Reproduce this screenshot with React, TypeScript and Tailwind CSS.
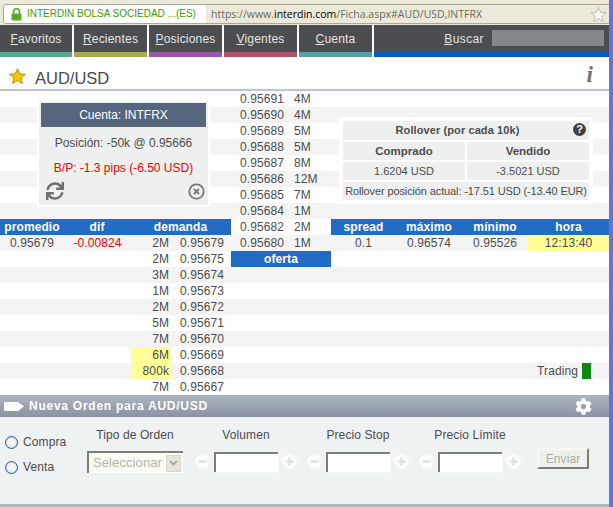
import React from "react";
import { FaSync, FaCog } from "react-icons/fa";

const navs: [string, string, string, string][] = [
  ["F", "avoritos", "w-[72px]", "border-[#57a98c]"],
  ["R", "ecientes", "w-[73px]", "border-[#a9a951]"],
  ["P", "osiciones", "w-[73px]", "border-[#9d55a6]"],
  ["V", "igentes", "w-[73px]", "border-[#a95567]"],
  ["C", "uenta", "w-[73px]", "border-[#579ea9]"],
];

const offer: [string, string][] = [
  ["0.95691", "4M"], ["0.95690", "4M"], ["0.95689", "5M"], ["0.95688", "5M"], ["0.95687", "8M"],
  ["0.95686", "12M"], ["0.95685", "7M"], ["0.95684", "1M"], ["0.95682", "2M"], ["0.95680", "1M"],
];

const demand: [string, string, boolean][] = [
  ["2M", "0.95679", false], ["2M", "0.95675", false], ["3M", "0.95674", false], ["1M", "0.95673", false],
  ["2M", "0.95672", false], ["5M", "0.95671", false], ["7M", "0.95670", false], ["6M", "0.95669", true],
  ["800k", "0.95668", true], ["7M", "0.95667", false],
];

function Head({ w, children }: { w: string; children: React.ReactNode }) {
  return <div className={`${w} text-center font-bold text-white tracking-[0.1px]`}>{children}</div>;
}

function Depth({ d }: { d: [string, string, boolean] }) {
  return (
    <div className="flex w-[100px] h-4">
      <div className={`w-10 text-right pr-[2px] ${d[2] ? "bg-[#ffff99]" : ""}`}>{d[0]}</div>
      <div className="pl-[9px]">{d[1]}</div>
    </div>
  );
}

function Stepper({ label }: { label: string }) {
  return (
    <div className="flex flex-col w-[102px] mr-[10px] items-center">
      <div className="h-[16px] leading-[16px] mb-[8px]">{label}</div>
      <div className="flex items-center gap-1 h-[21px]">
        <Round glyph="minus" />
        <div className="w-16 h-5 bg-white border-t-2 border-l-2 border-[#7f7d72] shadow-[1px_1px_0_#f8f8f0]" />
        <Round glyph="plus" />
      </div>
    </div>
  );
}

function Round({ glyph }: { glyph: "plus" | "minus" }) {
  return (
    <svg width="15" height="15" viewBox="0 0 15 15" className="shrink-0">
      <circle cx="7.5" cy="7.5" r="7.5" fill="#fafbfb" />
      <rect x="3.5" y="6.5" width="8" height="2" fill="#dcdfe0" />
      {glyph === "plus" && <rect x="6.5" y="3.5" width="2" height="8" fill="#dcdfe0" />}
    </svg>
  );
}

function Radio({ label, className }: { label: string; className: string }) {
  return (
    <div className={`flex items-center ${className}`}>
      <span className="w-[13px] h-[13px] rounded-full border-[1.5px] border-[#2f5d8f] bg-[#f4f6f6] shadow-[inset_0_0_2px_#a0a8b0]" />
      <span>{label}</span>
    </div>
  );
}

export default function App() {
  const rows = Array.from({ length: 19 }, (_, i) => i);
  return (
    <div
      className="w-[613px] h-[507px] overflow-hidden bg-white text-[12px] leading-4 text-[#4c4c4c] tracking-[0.1px] flex"
      style={{ fontFamily: '"Liberation Sans", Arial, sans-serif' }}
    >
      <div className="w-[609px] shrink-0 flex flex-col">
        {/* Browser address bar */}
        <div className="h-[25px] bg-[#ece9d8] flex items-start">
          <div className="ml-[3px] mt-1 w-full h-[20px] flex items-stretch border border-[#a8a698] rounded-[3px] overflow-hidden mr-[-2px]">
            <div className="w-[202px] bg-white flex items-center pl-[7px] text-[#3f9a00] text-[10px] tracking-[0px] gap-[5px] whitespace-nowrap">
              <svg width="11" height="13" viewBox="0 0 11 13" className="shrink-0">
                <path d="M2.5 6V3.8a3 3 0 0 1 6 0V6" fill="none" stroke="#5aa92a" strokeWidth="1.6" />
                <rect x="0.5" y="5.5" width="10" height="7" rx="1" fill="#5aa92a" />
              </svg>
              <span>INTERDIN BOLSA SOCIEDAD ...(ES)</span>
            </div>
            <div className="flex-1 flex items-center justify-between pl-[5px] text-[10.5px] text-[#6b6b60] tracking-[0px] whitespace-nowrap" style={{ fontFamily: '"Open Sans", sans-serif' }}>
              <span>https://www.<span className="text-black">interdin.com</span>/Ficha.aspx#AUD/USD,INTFRX</span>
              <svg width="17" height="17" viewBox="0 0 24 24" className="mr-[3px]">
                <path d="M12 2l3 7 7.5.6-5.7 4.9 1.8 7.3L12 18l-6.6 3.8 1.8-7.3L1.5 9.6 9 9z" fill="#fbfaf2" stroke="#b5b3a6" strokeWidth="1.2" />
              </svg>
            </div>
          </div>
        </div>

        {/* Nav */}
        <nav className="h-8 flex gap-[2px] text-[#e6e6e6] text-[12px] tracking-[0.2px]">
          {navs.map(([u, rest, w, c]) => (
            <div key={u} className={`${w} bg-[#4b4d50] border-b-[5px] ${c} pt-[6px] text-center`}>
              <u>{u}</u>{rest}
            </div>
          ))}
          <div className="flex-1 bg-[#4b4d50] border-b-[5px] border-[#0a5bc0] flex justify-end items-start pt-[5px] pr-[5px]">
            <span className="mr-2 mt-[1px] tracking-[0.4px]"><u>B</u>uscar</span>
            <div className="w-[112px] h-4 bg-[#85888b]" />
          </div>
        </nav>

        {/* Title */}
        <div className="h-[34px] border-b-2 border-[#bcc6da] flex items-center px-[9px] pt-[6px]">
          <svg width="17" height="16" viewBox="0 0 24 23" className="mb-[1px]">
            <path d="M12 .8l3.4 7.5 8.1.8-6.1 5.4 1.8 8-7.2-4.2-7.2 4.2 1.8-8L.5 9.1l8.1-.8z" fill="#f5c400" stroke="#8e7a10" strokeWidth="1" />
          </svg>
          <span className="ml-[9px] mt-[3px] text-[16.5px] text-[#4a4a4a] tracking-normal">AUD/USD</span>
          <span className="ml-auto mr-[7px] mb-[2px] text-[23px] italic font-bold text-[#707070]" style={{ fontFamily: '"Liberation Serif", serif' }}>i</span>
        </div>

        {/* Market table */}
        <div className="relative h-[304px]">
          {rows.map((i) => {
            const gray = i % 2 === 1;
            return (
              <div key={i} className={`h-4 flex whitespace-nowrap ${gray ? "bg-[#f4f4f4]" : "bg-white"}`}>
                <div className="w-[231px] flex">
                  {i === 8 ? (
                    <div className="w-full flex bg-[#236cc4]">
                      <Head w="w-16">promedio</Head>
                      <Head w="w-[66px]">dif</Head>
                      <Head w="w-[101px]">demanda</Head>
                    </div>
                  ) : i === 9 ? (
                    <>
                      <div className="w-16 text-center">0.95679</div>
                      <div className="w-[67px] text-center text-[#f00000]">-0.00824</div>
                      <Depth d={demand[0]} />
                    </>
                  ) : i > 9 ? (
                    <div className="pl-[131px]">
                      <Depth d={demand[i - 9]} />
                    </div>
                  ) : null}
                </div>
                <div className={`w-[100px] flex ${i === 8 ? "bg-white" : ""}`}>
                  {i < 10 ? (
                    <>
                      <div className="w-[63px] pl-[9px]">{offer[i][0]}</div>
                      <div>{offer[i][1]}</div>
                    </>
                  ) : i === 10 ? (
                    <div className="w-full bg-[#236cc4] text-center font-bold text-white">oferta</div>
                  ) : null}
                </div>
                <div className="flex-1 flex items-stretch">
                  {i === 8 ? (
                    <div className="w-full flex bg-[#236cc4]">
                      <Head w="w-[65px]">spread</Head>
                      <Head w="w-[66px]">máximo</Head>
                      <Head w="w-[66px]">mínimo</Head>
                      <Head w="w-[81px]">hora</Head>
                    </div>
                  ) : i === 9 ? (
                    <>
                      <div className="w-[65px] text-center">0.1</div>
                      <div className="w-[66px] text-center">0.96574</div>
                      <div className="w-[66px] text-center">0.95526</div>
                      <div className="w-[81px] text-center bg-[#ffff99]">12:13:40</div>
                    </>
                  ) : i === 17 ? (
                    <div className="w-full flex justify-end items-center pr-[31px]">
                      <span>Trading</span>
                    </div>
                  ) : null}
                </div>
              </div>
            );
          })}

          {/* Trading indicator */}
          <div className="absolute left-[582px] top-[272px] w-[9px] h-[16px] bg-[#0a8a10]" />

          {/* Account card */}
          <div className="absolute left-[37px] top-[10px] w-[173px] h-[106px] border-2 border-t border-white bg-[#eef0f0] text-center">
            <div className="mx-[2px] mt-[1px] h-6 leading-6 bg-[#56667c] text-white tracking-[0px]">Cuenta: INTFRX</div>
            <div className="mt-[8px] tracking-[0px]">Posición: -50k @ 0.95666</div>
            <div className="mt-[9px] text-[#f00000] tracking-[0px]">B/P: -1.3 pips (-6.50 USD)</div>
            <div className="flex justify-between items-center pl-[7px] pr-[3px] mt-[6px]">
              <FaSync size={18} color="#6d6f70" />
              <svg width="17" height="17" viewBox="0 0 17 17">
                <circle cx="8.5" cy="8.5" r="7.2" fill="none" stroke="#77797a" strokeWidth="1.8" />
                <path d="M6 6l5 5M11 6l-5 5" stroke="#77797a" strokeWidth="1.8" />
              </svg>
            </div>
          </div>

          {/* Rollover card */}
          <div className="absolute left-[339px] top-[26px] w-[254px] h-[87px] bg-white p-1 flex flex-col gap-[2px] text-center text-[#4c4c4c] text-[11px] tracking-[0px]">
            <div className="relative h-[19px] leading-[19px] pr-[17px] bg-[#eef0f0] font-bold tracking-[0.1px]">
              Rollover (por cada 10k)
              <span className="absolute right-[3px] top-[2px] w-[13px] h-[13px] rounded-full bg-[#404040] text-white text-[11px] leading-[13px] font-bold tracking-normal">?</span>
            </div>
            <div className="flex gap-[2px] h-[18px] text-[11.5px]">
              <div className="flex-1 bg-[#eef0f0] font-bold leading-[18px]">Comprado</div>
              <div className="flex-1 bg-[#eef0f0] font-bold leading-[18px]">Vendido</div>
            </div>
            <div className="flex gap-[2px] h-[18px]">
              <div className="flex-1 bg-[#eef0f0] leading-[18px]">1.6204 USD</div>
              <div className="flex-1 bg-[#eef0f0] leading-[18px]">-3.5021 USD</div>
            </div>
            <div className="h-[18px] bg-[#eef0f0] leading-[18px] text-[11px] tracking-[-0.12px] whitespace-nowrap">Rollover posición actual: -17.51 USD (-13.40 EUR)</div>
          </div>
        </div>

        {/* Order header */}
        <div className="h-[22px] bg-gradient-to-b from-[#adb5bf] to-[#8994a2] flex items-center pl-1 pr-[17px]">
          <svg width="20" height="9" viewBox="0 0 20 9" className="mr-[5px]">
            <path d="M0 1q0-1 1-1h13l6 4.5-6 4.5H1q-1 0-1-1z" fill="#fff" />
          </svg>
          <span className="font-bold text-white tracking-[0.75px]">Nueva Orden para AUD/USD</span>
          <FaCog size={17} color="#fff" className="ml-auto" />
        </div>

        {/* Order form */}
        <div className="flex-1 bg-[#eef2f3] border-b-[3px] border-[#b0b8bc] flex items-start">
          <div className="w-[87px] pl-[5px]">
            <Radio label="Compra" className="mt-[17px] gap-[5px]" />
            <Radio label="Venta" className="mt-[9px] gap-[5px]" />
          </div>
          <div className="w-[96px] mr-[12px] flex flex-col items-center mt-[10px]">
            <div className="h-4 mb-2">Tipo de Orden</div>
            <div className="w-full h-[22px] bg-[#fbfbf6] border-t-2 border-l-2 border-[#7f7d72] flex items-center pl-[4px] text-[#b4b4a8] text-[13px] tracking-[0.1px]">
              <span className="flex-1 overflow-hidden">Seleccionar</span>
              <span className="w-[15px] h-[17px] bg-[#e4e4da] border border-[#d6d6cc] flex items-center justify-center mr-[2px] shrink-0">
                <svg width="9" height="6" viewBox="0 0 9 6"><path d="M1 1l3.5 3.5L8 1" fill="none" stroke="#a8a89c" strokeWidth="1.8" /></svg>
              </span>
            </div>
          </div>
          <div className="flex mt-[10px]">
            <Stepper label="Volumen" />
            <Stepper label="Precio Stop" />
            <Stepper label="Precio Límite" />
          </div>
          <button className="mt-[31px] ml-[6px] w-[52px] h-[21px] bg-[#eff1ee] border-2 border-[#f8f8f2] border-r-[#7f7d72] border-b-[#7f7d72] text-[#aaaaa0]">Enviar</button>
        </div>
      </div>
      <div className="flex-1 bg-[#6a74d0]" />
    </div>
  );
}
